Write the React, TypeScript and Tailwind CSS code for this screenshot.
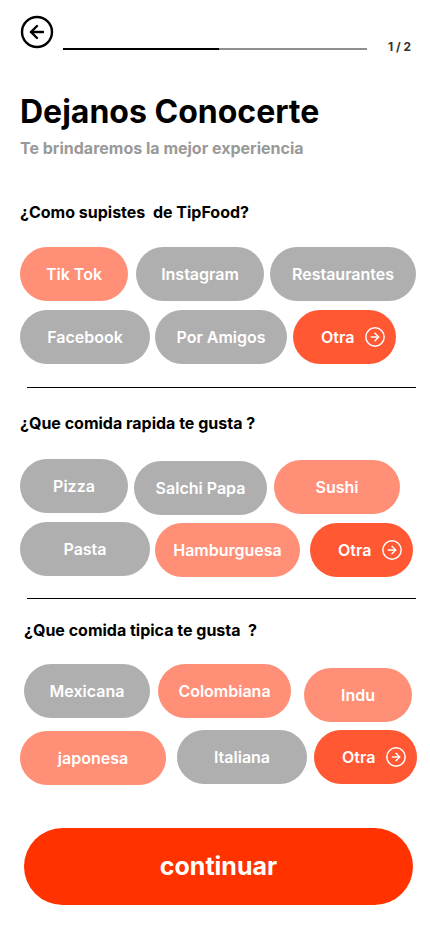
import { CircleArrowLeft, CircleArrowRight } from "lucide-react";

type Tone = "gray" | "salmon" | "hot";

const tones: Record<Tone, string> = {
  gray: "bg-[#afafaf]",
  salmon: "bg-[#ff8f77]",
  hot: "bg-[#ff5833]",
};

const Chip = ({
  label,
  tone,
  className,
}: {
  label: string;
  tone: Tone;
  className: string;
}) => (
  <div
    className={`flex h-[54px] shrink-0 items-center justify-center rounded-full text-[16px] font-semibold text-white ${tones[tone]} ${className}`}
  >
    {label}
  </div>
);

const Otra = ({ className }: { className: string }) => (
  <div
    className={`flex h-[54px] w-[103px] shrink-0 items-center gap-[10px] rounded-full bg-[#ff5833] pl-[28px] text-[16px] font-semibold text-white ${className}`}
  >
    <span>Otra</span>
    <CircleArrowRight size={22} strokeWidth={1.6} />
  </div>
);

const Question = ({ text, className }: { text: string; className: string }) => (
  <p className={`whitespace-pre text-[16px] font-bold leading-none text-black ${className}`}>{text}</p>
);

const Divider = ({ className }: { className: string }) => (
  <div className={`ml-[27px] h-px w-[389px] bg-black ${className}`}></div>
);

export default function App() {
  return (
    <div
      className="min-h-[932px] w-[430px] bg-white"
      style={{ fontFamily: "Inter, 'Noto Sans', sans-serif" }}
    >
      {/* Header */}
      <div className="flex h-[60px] items-start pt-[14px]">
        <CircleArrowLeft size={36} strokeWidth={1.6} className="ml-[19px] shrink-0 text-black" />
        <div className="ml-[8px] mt-[34px] flex h-[2px] w-[304px] bg-[#8e8e8e]">
          <div className="h-full w-[156px] bg-black"></div>
        </div>
        <span className="ml-[21px] mt-[27px] text-[12px] font-bold leading-none text-[#333]">1 / 2</span>
      </div>

      <h1 className="ml-[20px] mt-[36px] text-[32px] font-bold leading-none text-black">
        Dejanos Conocerte
      </h1>
      <p className="ml-[20px] mt-[12px] text-[16px] font-bold leading-none text-[#999]">
        Te brindaremos la mejor experiencia
      </p>

      {/* Section 1 */}
      <Question text="¿Como supistes  de TipFood?" className="ml-[20px] mt-[48px]" />
      <div className="mt-[27px] flex items-start">
        <Chip label="Tik Tok" tone="salmon" className="ml-[20px] w-[108px]" />
        <Chip label="Instagram" tone="gray" className="ml-[8px] w-[128px]" />
        <Chip label="Restaurantes" tone="gray" className="ml-[6px] w-[146px]" />
      </div>
      <div className="mt-[9px] flex items-start">
        <Chip label="Facebook" tone="gray" className="ml-[20px] w-[130px]" />
        <Chip label="Por Amigos" tone="gray" className="ml-[5px] w-[132px]" />
        <Otra className="ml-[6px]" />
      </div>
      <Divider className="mt-[23px]" />

      {/* Section 2 */}
      <Question text="¿Que comida rapida te gusta ?" className="ml-[20px] mt-[27px]" />
      <div className="mt-[28px] flex items-start">
        <Chip label="Pizza" tone="gray" className="ml-[20px] w-[108px]" />
        <Chip label="Salchi Papa" tone="gray" className="ml-[6px] mt-[2px] w-[133px]" />
        <Chip label="Sushi" tone="salmon" className="ml-[7px] mt-[1px] w-[126px]" />
      </div>
      <div className="mt-[7px] flex items-start">
        <Chip label="Pasta" tone="gray" className="ml-[20px] w-[130px]" />
        <Chip label="Hamburguesa" tone="salmon" className="ml-[5px] mt-[1px] w-[145px]" />
        <Otra className="ml-[10px] mt-[1px]" />
      </div>
      <Divider className="mt-[21px]" />

      {/* Section 3 */}
      <Question text="¿Que comida tipica te gusta  ?" className="ml-[24px] mt-[23px]" />
      <div className="mt-[26px] flex items-start">
        <Chip label="Mexicana" tone="gray" className="ml-[24px] w-[126px]" />
        <Chip label="Colombiana" tone="salmon" className="ml-[8px] w-[133px]" />
        <Chip label="Indu" tone="salmon" className="ml-[13px] mt-[4px] w-[108px]" />
      </div>
      <div className="mt-[8px] flex items-start">
        <Chip label="japonesa" tone="salmon" className="ml-[20px] mt-[1px] w-[146px]" />
        <Chip label="Italiana" tone="gray" className="ml-[11px] w-[130px]" />
        <Otra className="ml-[7px]" />
      </div>

      <button className="ml-[24px] mt-[43px] flex h-[77px] w-[389px] items-center justify-center rounded-full bg-[#ff3200] text-[25px] font-bold text-white">
        continuar
      </button>
    </div>
  );
}
